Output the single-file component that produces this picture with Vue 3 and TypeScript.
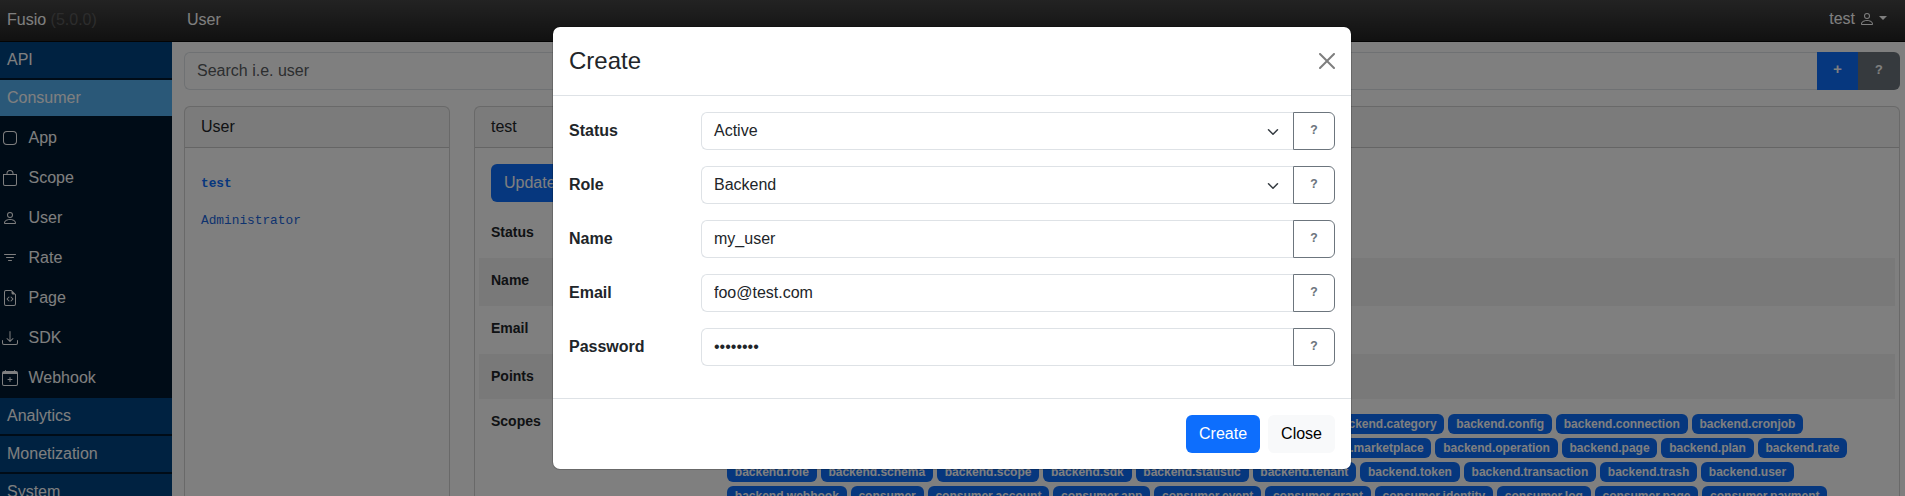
<script setup lang="ts">
import { ref } from 'vue'

interface NavItem {
  label: string
  icon: string[]
}

interface Field {
  label: string
  kind: 'select' | 'text' | 'password'
  value: string
}

const personIcon =
  'M8 8a3 3 0 1 0 0-6 3 3 0 0 0 0 6m2-3a2 2 0 1 1-4 0 2 2 0 0 1 4 0m4 8c0 1-1 1-1 1H3s-1 0-1-1 1-4 6-4 6 3 6 4m-1-.004c-.001-.246-.154-.986-.832-1.664C11.516 10.68 10.289 10 8 10s-3.516.68-4.168 1.332c-.678.678-.83 1.418-.832 1.664z'

const consumerItems: NavItem[] = [
  {
    label: 'App',
    icon: ['M11 2a3 3 0 0 1 3 3v6a3 3 0 0 1-3 3H5a3 3 0 0 1-3-3V5a3 3 0 0 1 3-3zM5 1a4 4 0 0 0-4 4v6a4 4 0 0 0 4 4h6a4 4 0 0 0 4-4V5a4 4 0 0 0-4-4z'],
  },
  {
    label: 'Scope',
    icon: ['M8 1a2.5 2.5 0 0 1 2.5 2.5V4h-5v-.5A2.5 2.5 0 0 1 8 1m3.5 3v-.5a3.5 3.5 0 1 0-7 0V4H1v10a2 2 0 0 0 2 2h10a2 2 0 0 0 2-2V4zM2 5h12v9a1 1 0 0 1-1 1H3a1 1 0 0 1-1-1z'],
  },
  { label: 'User', icon: [personIcon] },
  {
    label: 'Rate',
    icon: ['M6 10.5a.5.5 0 0 1 .5-.5h3a.5.5 0 0 1 0 1h-3a.5.5 0 0 1-.5-.5m-2-3a.5.5 0 0 1 .5-.5h7a.5.5 0 0 1 0 1h-7a.5.5 0 0 1-.5-.5m-2-3a.5.5 0 0 1 .5-.5h11a.5.5 0 0 1 0 1h-11a.5.5 0 0 1-.5-.5'],
  },
  {
    label: 'Page',
    icon: [
      'M14 4.5V14a2 2 0 0 1-2 2H4a2 2 0 0 1-2-2V2a2 2 0 0 1 2-2h5.5zm-3 0A1.5 1.5 0 0 1 9.5 3V1H4a1 1 0 0 0-1 1v12a1 1 0 0 0 1 1h8a1 1 0 0 0 1-1V4.5z',
      'M8.646 6.646a.5.5 0 0 1 .708 0l2 2a.5.5 0 0 1 0 .708l-2 2a.5.5 0 0 1-.708-.708L10.293 9 8.646 7.354a.5.5 0 0 1 0-.708m-1.292 0a.5.5 0 0 0-.708 0l-2 2a.5.5 0 0 0 0 .708l2 2a.5.5 0 0 0 .708-.708L5.707 9l1.647-1.646a.5.5 0 0 0 0-.708',
    ],
  },
  {
    label: 'SDK',
    icon: [
      'M.5 9.9a.5.5 0 0 1 .5.5v2.5a1 1 0 0 0 1 1h12a1 1 0 0 0 1-1v-2.5a.5.5 0 0 1 1 0v2.5a2 2 0 0 1-2 2H2a2 2 0 0 1-2-2v-2.5a.5.5 0 0 1 .5-.5',
      'M7.646 11.854a.5.5 0 0 0 .708 0l3-3a.5.5 0 0 0-.708-.708L8.5 10.293V1.5a.5.5 0 0 0-1 0v8.793L5.354 8.146a.5.5 0 1 0-.708.708z',
    ],
  },
  {
    label: 'Webhook',
    icon: [
      'M8 7a.5.5 0 0 1 .5.5V9H10a.5.5 0 0 1 0 1H8.5v1.5a.5.5 0 0 1-1 0V10H6a.5.5 0 0 1 0-1h1.5V7.5A.5.5 0 0 1 8 7',
      'M3.5 0a.5.5 0 0 1 .5.5V1h8V.5a.5.5 0 0 1 1 0V1h1a2 2 0 0 1 2 2v11a2 2 0 0 1-2 2H2a2 2 0 0 1-2-2V3a2 2 0 0 1 2-2h1V.5a.5.5 0 0 1 .5-.5M1 4v10a1 1 0 0 0 1 1h12a1 1 0 0 0 1-1V4z',
    ],
  },
]

const lowerSections: string[] = ['Analytics', 'Monetization', 'System']

const backendScopes = [
  'account', 'action', 'app', 'audit', 'backup', 'category', 'config', 'connection', 'cronjob',
  'dashboard', 'event', 'generator', 'identity', 'log', 'marketplace', 'operation', 'page', 'plan', 'rate',
  'role', 'schema', 'scope', 'sdk', 'statistic', 'tenant', 'token', 'transaction', 'trash', 'user', 'webhook',
]
const consumerScopes = ['account', 'app', 'event', 'grant', 'identity', 'log', 'page', 'payment']

const scopes: string[] = [
  'backend',
  ...backendScopes.map((s) => `backend.${s}`),
  'consumer',
  ...consumerScopes.map((s) => `consumer.${s}`),
]

const detailRows: string[] = ['Status', 'Name', 'Email', 'Points']

const fields = ref<Field[]>([
  { label: 'Status', kind: 'select', value: 'Active' },
  { label: 'Role', kind: 'select', value: 'Backend' },
  { label: 'Name', kind: 'text', value: 'my_user' },
  { label: 'Email', kind: 'text', value: 'foo@test.com' },
  { label: 'Password', kind: 'password', value: 'password' },
])
</script>

<template>
  <div class="page">
    <header class="navbar">
      <div class="brand">Fusio <span class="version">(5.0.0)</span></div>
      <div class="crumb">User</div>
      <div class="account">
        <span>test</span>
        <svg class="icon" viewBox="0 0 16 16"><path :d="personIcon" /></svg>
        <i class="caret"></i>
      </div>
    </header>

    <div class="layout">
      <nav class="sidebar">
        <a class="section">API</a>
        <a class="section active">Consumer</a>
        <div class="items">
          <a v-for="item in consumerItems" :key="item.label" class="item">
            <svg class="icon" viewBox="0 0 16 16">
              <path v-for="d in item.icon" :key="d" :d="d" />
            </svg>
            <span>{{ item.label }}</span>
          </a>
        </div>
        <a v-for="s in lowerSections" :key="s" class="section">{{ s }}</a>
      </nav>

      <main class="content">
        <div class="search">
          <input class="search-input" type="text" placeholder="Search i.e. user" />
          <button class="search-add">+</button>
          <button class="search-help">?</button>
        </div>

        <div class="columns">
          <section class="card list">
            <div class="card-head">User</div>
            <div class="list-body">
              <a class="entry current">test</a>
              <a class="entry">Administrator</a>
            </div>
          </section>

          <section class="card detail">
            <div class="card-head">test</div>
            <div class="actions"><button class="btn primary">Update</button></div>
            <div class="rows">
              <div v-for="row in detailRows" :key="row" class="row" :class="row.toLowerCase()">
                <div class="row-key">{{ row }}</div>
              </div>
              <div class="row scopes">
                <div class="row-key">Scopes</div>
                <div class="badges">
                  <span v-for="s in scopes" :key="s" class="badge">{{ s }}</span>
                </div>
              </div>
            </div>
          </section>
        </div>
      </main>
    </div>

    <div class="backdrop">
      <div class="modal">
        <div class="modal-head">
          <h4>Create</h4>
          <svg class="close" viewBox="0 0 16 16">
            <path d="M.293.293a1 1 0 0 1 1.414 0L8 6.586 14.293.293a1 1 0 1 1 1.414 1.414L9.414 8l6.293 6.293a1 1 0 0 1-1.414 1.414L8 9.414l-6.293 6.293a1 1 0 0 1-1.414-1.414L6.586 8 .293 1.707a1 1 0 0 1 0-1.414z" />
          </svg>
        </div>
        <div class="modal-body">
          <div v-for="f in fields" :key="f.label" class="field">
            <label class="field-label">{{ f.label }}</label>
            <div class="group">
              <div v-if="f.kind === 'select'" class="control select">
                <span>{{ f.value }}</span>
                <svg class="chevron" viewBox="0 0 16 16"><path d="m2 5 6 6 6-6" /></svg>
              </div>
              <input v-else v-model="f.value" class="control" :type="f.kind" />
              <button class="help">?</button>
            </div>
          </div>
        </div>
        <div class="modal-foot">
          <button class="btn primary">Create</button>
          <button class="btn light">Close</button>
        </div>
      </div>
    </div>
  </div>
</template>

<style>
html,
body {
  margin: 0;
  overflow: hidden;
}
</style>

<style scoped>
.page,
.page * {
  box-sizing: border-box;
}
.page {
  position: relative;
  height: 496px;
  overflow: hidden;
  background: #fff;
  color: #212529;
  font: 16px/24px Arial, 'Liberation Sans', sans-serif;
}
button,
input {
  margin: 0;
  font: inherit;
  outline: none;
}
.icon {
  width: 16px;
  height: 16px;
  fill: currentColor;
  flex: none;
}

.navbar {
  display: flex;
  height: 42px;
  padding-top: 8px;
  background: linear-gradient(#464646, #222);
  border-bottom: 1px solid #080808;
  color: #fff;
}
.brand {
  width: 187px;
  padding-left: 7px;
}
.version {
  color: #5a5a5a;
}
.crumb {
  flex: 1;
}
.account {
  display: flex;
  height: 24px;
  margin-top: -1px;
  padding-right: 18px;
}
.account .icon {
  margin: 4px 4px 0 4px;
}
.caret {
  width: 8px;
  height: 4px;
  margin-top: 9px;
  border-top: 4px solid;
  border-left: 4px solid transparent;
  border-right: 4px solid transparent;
}

.layout {
  display: flex;
  height: 454px;
}
.sidebar {
  width: 172px;
  flex: none;
  background: #00182e;
  color: #fff;
}
.section {
  display: block;
  height: 36px;
  margin-bottom: 2px;
  padding: 6px 7px;
  background: #004483;
}
.section.active {
  margin-bottom: 0;
  background: #55b1f1;
}
.items {
  padding-top: 2px;
}
.item {
  display: flex;
  align-items: center;
  height: 40px;
  padding-left: 2px;
  gap: 10.5px;
}

.content {
  flex: 1;
  min-width: 0;
  padding: 10px 5px 0 12px;
}
.search {
  display: flex;
  height: 38px;
}
.search-input {
  flex: 1;
  padding: 6px 12px;
  border: 1px solid #dee2e6;
  border-right: 0;
  border-radius: 6px 0 0 6px;
  background: #fff;
}
.search-input::placeholder {
  color: #595c5f;
  opacity: 1;
}
.search-add,
.search-help {
  width: 41px;
  border: 0;
  padding: 0;
  background: #0d6efd;
  color: #fff;
  font: bold 15px/24px 'Liberation Mono', monospace;
}
.search-help {
  width: 42px;
  border-radius: 0 6px 6px 0;
  background: #6c757d;
  font-size: 13px;
}

.columns {
  display: flex;
  gap: 24px;
  margin-top: 16px;
}
.card {
  height: 600px;
  border: 1px solid rgba(0, 0, 0, 0.175);
  border-radius: 6px;
}
.card-head {
  height: 41px;
  padding: 8px 16px;
  background: rgba(0, 0, 0, 0.03);
  border-bottom: 1px solid rgba(0, 0, 0, 0.175);
}
.list {
  width: 266px;
  flex: none;
}
.detail {
  flex: 1;
  min-width: 0;
}
.list-body {
  display: flex;
  flex-direction: column;
  gap: 13px;
  padding: 24px 16px;
}
.entry {
  color: #1c66dd;
  font: 12.8px/24px 'Liberation Mono', monospace;
}
.entry.current {
  color: #0d6efd;
  font-weight: bold;
}
.actions {
  padding: 16px 16px 8px;
}
.btn {
  display: block;
  height: 38px;
  padding: 6px 12px;
  border: 1px solid transparent;
  border-radius: 6px;
}
.primary {
  background: #0d6efd;
  color: #fff;
}
.light {
  background: #f8f9fa;
  color: #000;
}
.rows {
  padding: 0 4px;
}
.row {
  display: flex;
  height: 48px;
  padding: 11px 12px;
}
.row-key {
  width: 236px;
  flex: none;
  font-size: 14px;
  line-height: 22px;
  font-weight: bold;
}
.name,
.points {
  background: rgba(0, 0, 0, 0.05);
}
.points {
  height: 45px;
}
.badges {
  display: flex;
  flex-wrap: wrap;
  align-content: flex-start;
  gap: 4px;
  padding-top: 4px;
}
.badge {
  height: 20px;
  padding: 0 7.8px;
  border-radius: 6px;
  background: #0d6efd;
  color: #fff;
  font-size: 12px;
  line-height: 20px;
  font-weight: bold;
}

.backdrop {
  position: absolute;
  inset: 0;
  padding: 26px 0 0 552px;
  background: rgba(0, 0, 0, 0.5);
}
.modal {
  width: 800px;
  border: 1px solid rgba(0, 0, 0, 0.175);
  border-radius: 8px;
  background: #fff;
  background-clip: padding-box;
}
.modal-head {
  display: flex;
  align-items: center;
  justify-content: space-between;
  height: 69px;
  padding: 0 16px;
  border-bottom: 1px solid #dee2e6;
}
.modal-head h4 {
  margin: 0;
  font-size: 24px;
  line-height: 36px;
  font-weight: normal;
}
.close {
  width: 16px;
  height: 16px;
  opacity: 0.5;
}
.modal-body {
  padding: 16px;
}
.field {
  display: flex;
  margin-bottom: 16px;
}
.field-label {
  width: 132px;
  padding-top: 7px;
  font-weight: bold;
}
.group {
  display: flex;
  flex: 1;
  height: 38px;
}
.control {
  flex: 1;
  min-width: 0;
  height: 38px;
  padding: 6px 12px;
  border: 1px solid #dee2e6;
  border-right: 0;
  border-radius: 6px 0 0 6px;
  background: #fff;
  color: #212529;
}
.select {
  display: flex;
  justify-content: space-between;
}
.chevron {
  width: 16px;
  height: 12px;
  margin-top: 7px;
  fill: none;
  stroke: #343a40;
  stroke-width: 2;
  stroke-linecap: round;
  stroke-linejoin: round;
}
.help {
  width: 42px;
  padding: 0;
  border: 1px solid #6c757d;
  border-radius: 0 6px 6px 0;
  background: #fff;
  color: #6c757d;
  font: bold 12.5px/24px 'Liberation Mono', monospace;
}
.modal-foot {
  display: flex;
  justify-content: flex-end;
  gap: 8px;
  padding: 16px;
  border-top: 1px solid #dee2e6;
}
</style>
